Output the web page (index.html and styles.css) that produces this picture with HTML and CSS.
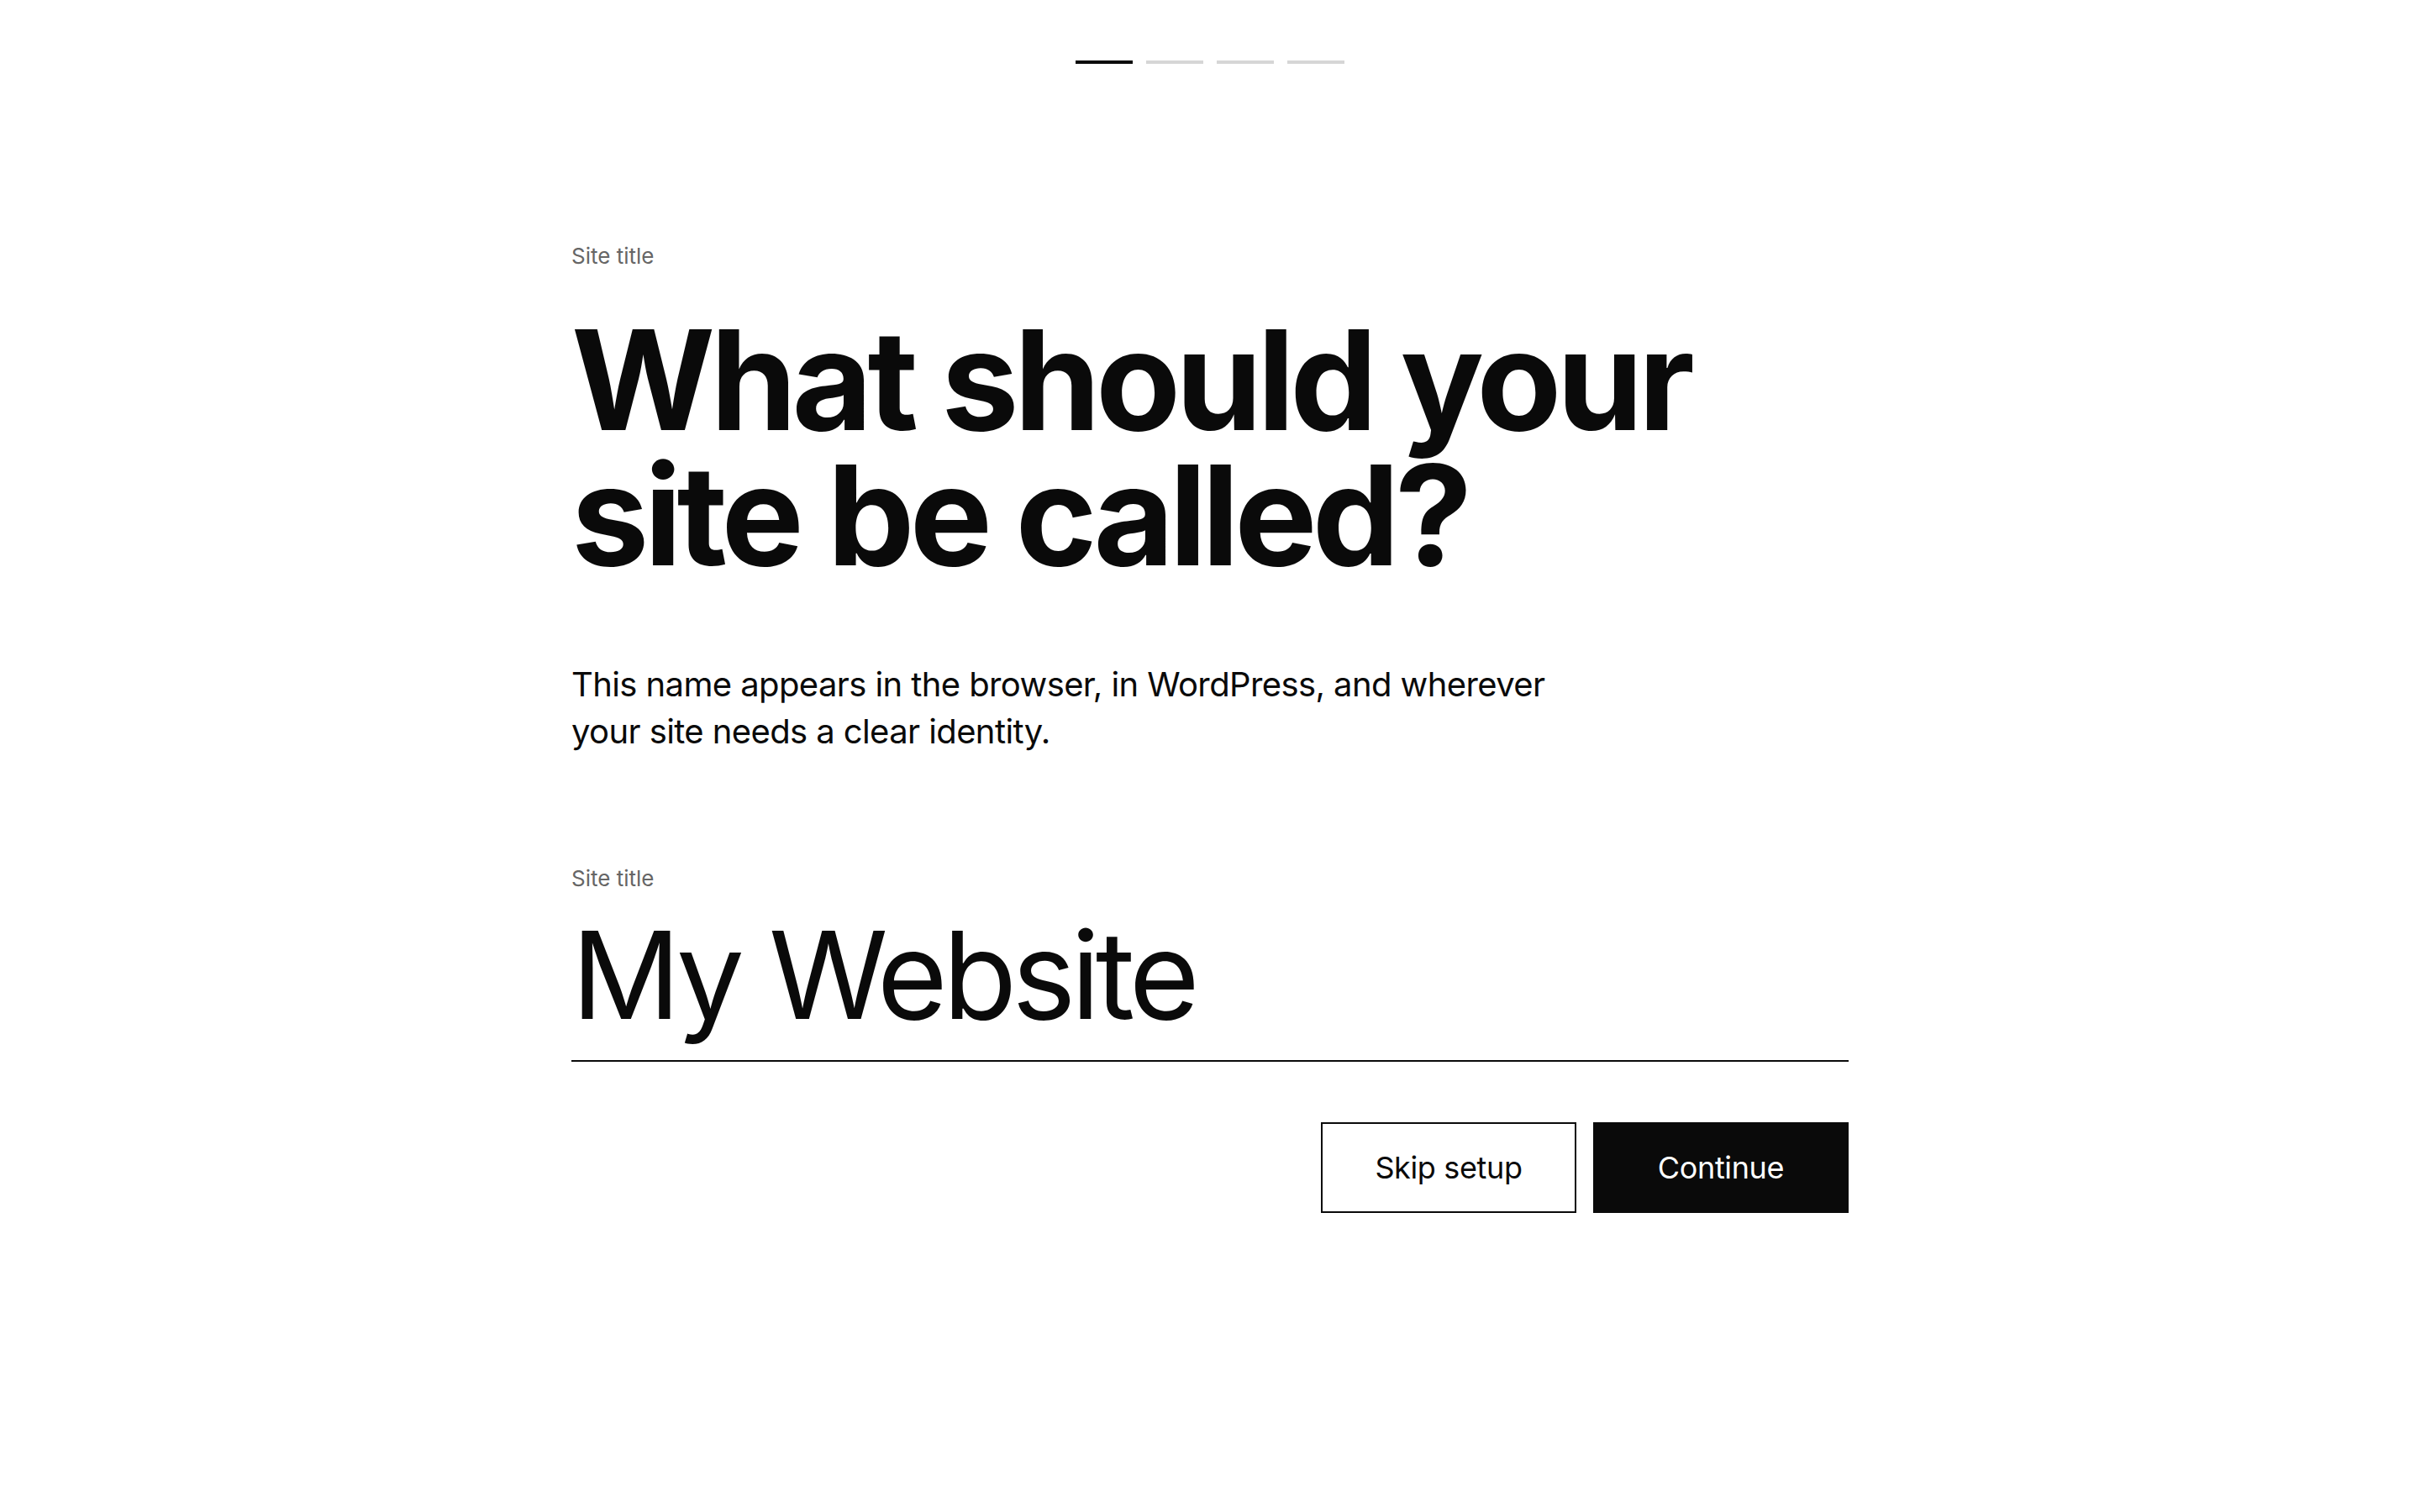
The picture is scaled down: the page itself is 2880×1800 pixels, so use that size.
FILE: index.html
```html
<!DOCTYPE html>
<html lang="en">
  <head>
    <meta charset="UTF-8" />
    <meta name="viewport" content="width=device-width, initial-scale=1.0" />
    <title>Site setup</title>
    <link rel="stylesheet" href="styles.css">
  </head>
  <body>
    <div class="progress">
      <span class="step active"></span>
      <span class="step"></span>
      <span class="step"></span>
      <span class="step"></span>
    </div>

    <div class="container">
      <div class="eyebrow">Site title</div>
      <h1>What should your site be called?</h1>
      <p class="lead">This name appears in the browser, in WordPress, and wherever your site needs a clear identity.</p>

      <div class="field">
        <label for="siteTitle">Site title</label>
        <input type="text" id="siteTitle" value="My Website" />
      </div>

      <div class="actions">
        <button class="btn btn-outline">Skip setup</button>
        <button class="btn btn-primary">Continue</button>
      </div>
    </div>
  </body>
</html>
```

FILE: styles.css
```css
body {
  margin: 0;
  background: #fff;
  color: #0a0a0a;
  font-family: Inter, "Noto Sans", sans-serif;
}
.progress {
  display: flex;
  justify-content: center;
  gap: 16px;
  padding-top: 72px;
}
.step {
  display: block;
  width: 68px;
  height: 4px;
  background: #d6d6d6;
}
.step.active {
  background: #0a0a0a;
}
.container {
  max-width: 1520px;
  margin: 0 auto;
}
.eyebrow,
.field label {
  display: block;
  font-size: 26px;
  line-height: 30px;
  color: #666;
}
.eyebrow {
  margin-top: 214px;
}
h1 {
  margin: 52px 0 0;
  max-width: 1400px;
  font-size: 165px;
  line-height: 161px;
  font-weight: 700;
  letter-spacing: -0.035em;
}
.lead {
  margin: 93px 0 0;
  max-width: 1200px;
  font-size: 40px;
  line-height: 56px;
  letter-spacing: -0.015em;
}
.field {
  margin-top: 132px;
}
.field input {
  display: block;
  box-sizing: content-box;
  width: 100%;
  height: 172px;
  margin-top: 13px;
  padding: 0 0 16px;
  border: 0;
  border-bottom: 2px solid #0a0a0a;
  outline: none;
  font-family: inherit;
  font-size: 144px;
  color: #0a0a0a;
  letter-spacing: -0.04em;
}
.actions {
  display: flex;
  justify-content: flex-end;
  gap: 20px;
  margin-top: 72px;
}
.btn {
  width: 304px;
  height: 108px;
  font-family: inherit;
  font-size: 36px;
  letter-spacing: -0.01em;
  cursor: pointer;
}
.btn-outline {
  background: #fff;
  color: #0a0a0a;
  border: 2px solid #0a0a0a;
}
.btn-primary {
  background: #0a0a0a;
  color: #fff;
  border: 2px solid #0a0a0a;
}
```
